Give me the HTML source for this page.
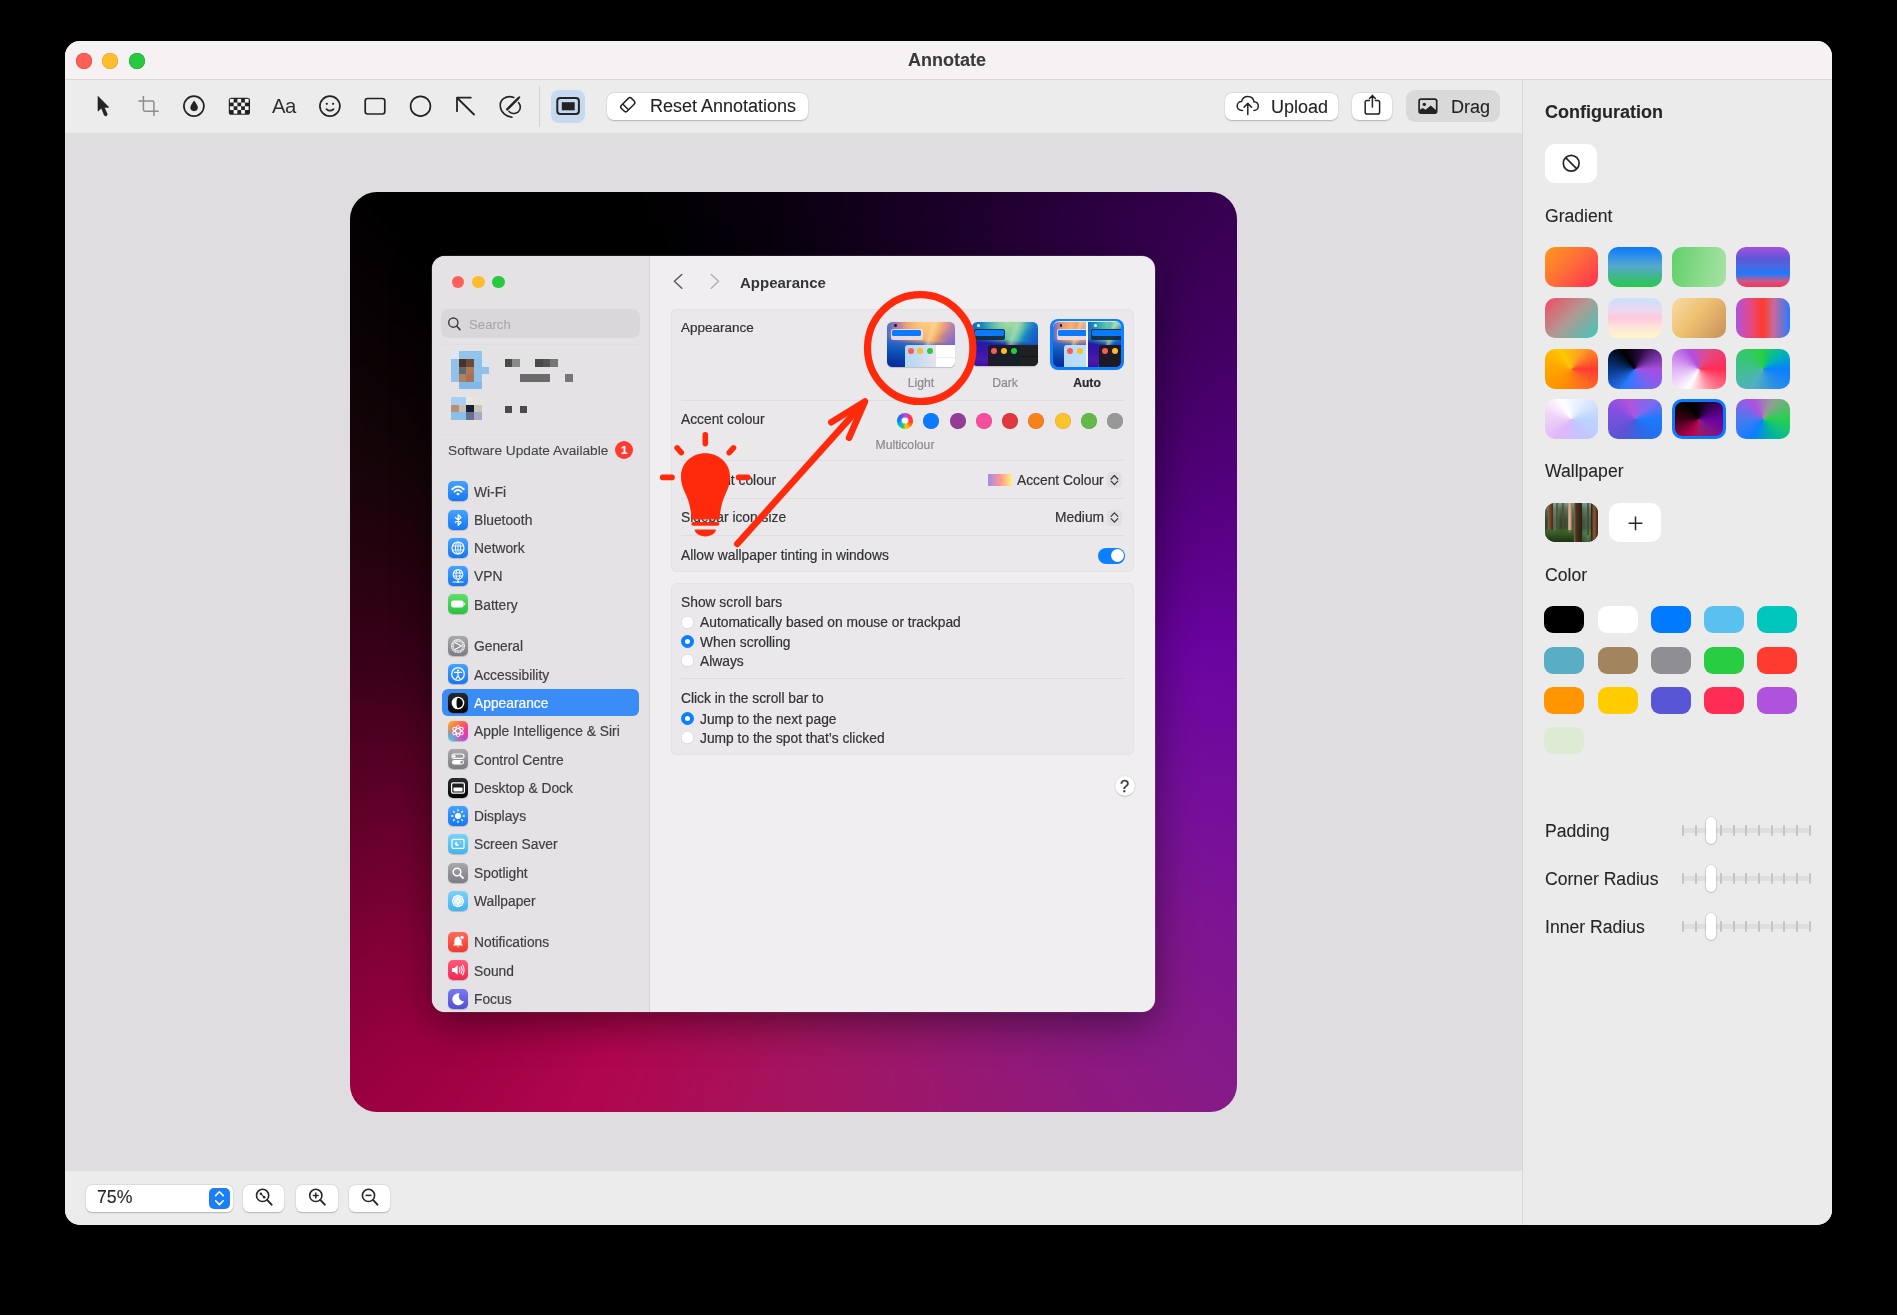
<!DOCTYPE html><html><head><meta charset="utf-8"><style>
html,body{margin:0;padding:0}
body{width:1897px;height:1315px;background:#000;position:relative;overflow:hidden;font-family:"Liberation Sans",sans-serif}
.a{position:absolute}
.t{position:absolute;white-space:nowrap;will-change:transform}
svg.a{overflow:visible}
</style></head><body>
<div class="a" style="left:65px;top:41px;width:1767px;height:1184px;border-radius:15px;overflow:hidden;background:#ebebeb">
<div class="a" style="left:-65px;top:-41px;width:1897px;height:1315px">
<div class="a" style="left:65.0px;top:41.0px;width:1767.0px;height:38.0px;background:#f6f2f4;border-radius:0px;"></div>
<div class="a" style="left:65.0px;top:79.0px;width:1767.0px;height:1.0px;background:#d9d7d9;border-radius:0px;"></div>
<div class="a" style="left:65.0px;top:80.0px;width:1457.0px;height:53.0px;background:#ececec;border-radius:0px;"></div>
<div class="a" style="left:65.0px;top:133.0px;width:1457.0px;height:1038.0px;background:#dfdde0;border-radius:0px;"></div>
<div class="a" style="left:65.0px;top:1171.0px;width:1457.0px;height:54.0px;background:#ececec;border-radius:0px;"></div>
<div class="a" style="left:1522.0px;top:80.0px;width:310.0px;height:1145.0px;background:#ebebeb;border-radius:0px;"></div>
<div class="a" style="left:1522.0px;top:80.0px;width:1.0px;height:1145.0px;background:#d6d6d6;border-radius:0px;"></div>
<div class="a" style="left:75.5px;top:53.0px;width:16.0px;height:16.0px;background:#ff5f57;border-radius:8px;box-shadow:inset 0 0 0 0.5px #e2463f"></div>
<div class="a" style="left:102.1px;top:53.0px;width:16.0px;height:16.0px;background:#febc2e;border-radius:8px;box-shadow:inset 0 0 0 0.5px #e1a325"></div>
<div class="a" style="left:128.7px;top:53.0px;width:16.0px;height:16.0px;background:#28c840;border-radius:8px;box-shadow:inset 0 0 0 0.5px #1aab29"></div>
<div class="t" style="left:908.0px;top:50.8px;font-size:18px;line-height:18px;color:#3a3a3a;font-weight:700;-webkit-text-stroke:0.1px #3a3a3a;">Annotate</div>
<svg class="a" style="left:0.0px;top:0.0px;" width="1897" height="140" viewBox="0 0 1897 140"><path d="M98 96.3 L98 111.2 L101.4 108.1 L104.2 114.9 Q105 116.4 106.5 115.7 Q107.7 115 107.1 113.8 L104.3 107.6 L108.8 107.3 Z" fill="#232323" stroke="#232323" stroke-width="0.6" stroke-linejoin="round"/></svg>
<svg class="a" style="left:0.0px;top:0.0px;" width="1897" height="140" viewBox="0 0 1897 140"><path d="M143.4 95.9 V109.6 Q143.4 111.3 145.1 111.3 H158.7 M138.3 101 H152.2 Q153.9 101 153.9 102.7 V116" fill="none" stroke="#8c8c8c" stroke-width="1.5"/></svg>
<svg class="a" style="left:0.0px;top:0.0px;" width="1897" height="140" viewBox="0 0 1897 140"><circle cx="193.9" cy="106.1" r="10.0" fill="none" stroke="#232323" stroke-width="1.7"/><path d="M194.1 100.6 C192.5 103 190.3 105.6 190.3 107.6 C190.3 109.8 192 111.2 194.1 111.2 C196.2 111.2 197.9 109.8 197.9 107.6 C197.9 105.6 195.7 103 194.1 100.6 Z" fill="#232323"/></svg>
<svg class="a" style="left:0.0px;top:0.0px;" width="1897" height="140" viewBox="0 0 1897 140"><rect x="228.8" y="97.7" width="21.2" height="17.1" rx="2.6" fill="#232323"/><rect x="229.90" y="98.90" width="3.75" height="3.7" fill="#f4f4f4"/><rect x="237.40" y="98.90" width="3.75" height="3.7" fill="#f4f4f4"/><rect x="244.90" y="98.90" width="3.75" height="3.7" fill="#f4f4f4"/><rect x="233.65" y="102.60" width="3.75" height="3.7" fill="#f4f4f4"/><rect x="241.15" y="102.60" width="3.75" height="3.7" fill="#f4f4f4"/><rect x="229.90" y="106.30" width="3.75" height="3.7" fill="#f4f4f4"/><rect x="237.40" y="106.30" width="3.75" height="3.7" fill="#f4f4f4"/><rect x="244.90" y="106.30" width="3.75" height="3.7" fill="#f4f4f4"/><rect x="233.65" y="110.00" width="3.75" height="3.7" fill="#f4f4f4"/><rect x="241.15" y="110.00" width="3.75" height="3.7" fill="#f4f4f4"/></svg>
<div class="t" style="left:272.3px;top:96.2px;font-size:20.3px;line-height:20.3px;color:#2e2e2e;font-weight:400;letter-spacing:-0.6px;-webkit-text-stroke:0px">Aa</div>
<svg class="a" style="left:0.0px;top:0.0px;" width="1897" height="140" viewBox="0 0 1897 140"><circle cx="329.9" cy="106.1" r="10.0" fill="none" stroke="#232323" stroke-width="1.7"/><circle cx="326.8" cy="103.8" r="1.1" fill="#232323"/><circle cx="333.1" cy="103.8" r="1.1" fill="#232323"/><path d="M326.4 109.1 Q330 112.3 333.6 109.1" fill="none" stroke="#232323" stroke-width="1.6" stroke-linecap="round"/></svg>
<svg class="a" style="left:0.0px;top:0.0px;" width="1897" height="140" viewBox="0 0 1897 140"><rect x="365.2" y="98.5" width="19.6" height="15.5" rx="2.4" fill="none" stroke="#232323" stroke-width="1.7"/></svg>
<svg class="a" style="left:0.0px;top:0.0px;" width="1897" height="140" viewBox="0 0 1897 140"><circle cx="420.5" cy="106.2" r="9.9" fill="none" stroke="#232323" stroke-width="1.7"/></svg>
<svg class="a" style="left:0.0px;top:0.0px;" width="1897" height="140" viewBox="0 0 1897 140"><path d="M470.8 97.7 H457 V111.2 M457.3 98 L474 114.5" fill="none" stroke="#232323" stroke-width="1.8" stroke-linecap="round" stroke-linejoin="round"/></svg>
<svg class="a" style="left:0.0px;top:0.0px;" width="1897" height="140" viewBox="0 0 1897 140"><path d="M513.8 97.5 C506 94.5 499.5 100 500.3 106.5 C501 112.5 506 116.8 512 117.3" fill="none" stroke="#232323" stroke-width="1.6" stroke-linecap="round"/><path d="M509 111.4 C511 113.8 515.5 114.2 518 112.2 C521 109.8 521 105.5 518.5 102.6" fill="none" stroke="#232323" stroke-width="1.6" stroke-linecap="round"/><path d="M507.2 109.4 L518.2 98.3" fill="none" stroke="#232323" stroke-width="2.4" stroke-linecap="round"/><circle cx="519.3" cy="97.3" r="1" fill="#232323"/></svg>
<div class="a" style="left:539.0px;top:85.5px;width:1.0px;height:41.2px;background:#d2d2d2;border-radius:0px;"></div>
<div class="a" style="left:551.1px;top:89.5px;width:34.3px;height:33.3px;background:#c6d9f1;border-radius:8px;"></div>
<svg class="a" style="left:0.0px;top:0.0px;" width="1897" height="140" viewBox="0 0 1897 140"><rect x="557.3" y="98" width="21.6" height="16.1" rx="3" fill="none" stroke="#232323" stroke-width="2"/><rect x="561.8" y="102.2" width="12.9" height="8.1" fill="#232323"/></svg>
<div class="a" style="left:607.0px;top:93.0px;width:201.0px;height:26.5px;background:#fff;border-radius:7px;box-shadow:0 0.5px 1.5px rgba(0,0,0,0.22),0 0 0 0.5px rgba(0,0,0,0.06)"></div>
<svg class="a" style="left:0.0px;top:0.0px;" width="1897" height="140" viewBox="0 0 1897 140"><g transform="rotate(-45 627.8 104.7)"><rect x="620.7" y="100.55" width="14.2" height="8.3" rx="2.3" fill="none" stroke="#232323" stroke-width="1.5"/><path d="M624.7 100.55 V108.85" stroke="#232323" stroke-width="1.5"/></g></svg>
<div class="t" style="left:649.5px;top:96.6px;font-size:18px;line-height:18px;color:#232323;font-weight:400;-webkit-text-stroke:0.1px #232323;">Reset Annotations</div>
<div class="a" style="left:1224.8px;top:93.0px;width:113.2px;height:27.0px;background:#fff;border-radius:7px;box-shadow:0 0.5px 1.5px rgba(0,0,0,0.22),0 0 0 0.5px rgba(0,0,0,0.06)"></div>
<svg class="a" style="left:0.0px;top:0.0px;" width="1897" height="140" viewBox="0 0 1897 140"><path d="M1242.5 110.5 C1238.5 110.5 1237.2 107.8 1237.2 106 C1237.2 103.4 1239.2 101.6 1241.6 101.6 C1242.2 98.5 1244.6 96.4 1247.8 96.4 C1251.2 96.4 1253.6 98.8 1254 101.8 C1256.5 101.9 1258.3 103.8 1258.3 106.2 C1258.3 108.6 1256.5 110.5 1254 110.5" fill="none" stroke="#232323" stroke-width="1.5" stroke-linecap="round"/><path d="M1247.8 114.6 V103.6 M1244 107.2 L1247.8 103.4 L1251.6 107.2" fill="none" stroke="#232323" stroke-width="1.5" stroke-linecap="round" stroke-linejoin="round"/></svg>
<div class="t" style="left:1270.5px;top:97.6px;font-size:18px;line-height:18px;color:#232323;font-weight:400;-webkit-text-stroke:0.1px #232323;">Upload</div>
<div class="a" style="left:1352.0px;top:93.0px;width:40.3px;height:27.0px;background:#fff;border-radius:7px;box-shadow:0 0.5px 1.5px rgba(0,0,0,0.22),0 0 0 0.5px rgba(0,0,0,0.06)"></div>
<svg class="a" style="left:0.0px;top:0.0px;" width="1897" height="140" viewBox="0 0 1897 140"><path d="M1369.4 100.4 H1367 Q1365.2 100.4 1365.2 102.2 V112.3 Q1365.2 114.1 1367 114.1 H1377.8 Q1379.6 114.1 1379.6 112.3 V102.2 Q1379.6 100.4 1377.8 100.4 H1375.4 M1372.4 107 V95.6 M1369.5 98.4 L1372.4 95.4 L1375.3 98.4" fill="none" stroke="#232323" stroke-width="1.5" stroke-linecap="round" stroke-linejoin="round"/></svg>
<div class="a" style="left:1406.0px;top:90.0px;width:94.3px;height:31.7px;background:#d9d9d9;border-radius:9px;"></div>
<svg class="a" style="left:0.0px;top:0.0px;" width="1897" height="140" viewBox="0 0 1897 140"><rect x="1419.1" y="99.2" width="17.6" height="13.9" rx="2" fill="none" stroke="#232323" stroke-width="1.7"/><path d="M1419.1 110.9 Q1421.2 107.7 1423 108.3 Q1424.4 108.8 1425.6 109.8 L1430.7 105.6 L1436.7 110.8 V113.1 H1419.1 Z" fill="#232323"/><circle cx="1424.3" cy="104.4" r="1.7" fill="#232323"/></svg>
<div class="t" style="left:1451.3px;top:97.6px;font-size:18px;line-height:18px;color:#232323;font-weight:400;-webkit-text-stroke:0.1px #232323;">Drag</div>
<div class="t" style="left:1544.6px;top:103.4px;font-size:18px;line-height:18px;color:#262626;font-weight:700;-webkit-text-stroke:0.1px #262626;">Configuration</div>
<div class="a" style="left:1544.8px;top:143.6px;width:52.5px;height:39.4px;background:#fff;border-radius:10px;"></div>
<svg class="a" style="left:0.0px;top:0.0px;" width="1897" height="200" viewBox="0 0 1897 200"><circle cx="1571.2" cy="163.2" r="7.9" fill="none" stroke="#262626" stroke-width="1.7"/><path d="M1565.6 157.6 L1576.8 168.8" stroke="#262626" stroke-width="1.7"/></svg>
<div class="t" style="left:1545.0px;top:207.5px;font-size:17.6px;line-height:17.6px;color:#262626;font-weight:400;-webkit-text-stroke:0.1px #262626;">Gradient</div>
<div class="a" style="left:1544.6px;top:247.0px;width:53.2px;height:40.2px;background:linear-gradient(135deg,#ff9a1a,#ff6a3a 50%,#ff2d55);border-radius:10px;"></div>
<div class="a" style="left:1608.4px;top:247.0px;width:53.2px;height:40.2px;background:linear-gradient(180deg,#0a7aff,#55a8cc 48%,#28c84a);border-radius:10px;"></div>
<div class="a" style="left:1672.4px;top:247.0px;width:53.2px;height:40.2px;background:linear-gradient(100deg,#60d068,#86da88 50%,#a8e2a6);border-radius:10px;"></div>
<div class="a" style="left:1736.4px;top:247.0px;width:53.2px;height:40.2px;background:linear-gradient(180deg,#a850e2 0%,#5a58d6 30%,#4a6ae4 50%,#1a7aff 66%,#c85a8a 85%,#ff3058 100%);border-radius:10px;"></div>
<div class="a" style="left:1544.6px;top:297.8px;width:53.2px;height:40.2px;background:linear-gradient(135deg,#f24a62,#b09a94 50%,#3ec8b8);border-radius:10px;"></div>
<div class="a" style="left:1608.4px;top:297.8px;width:53.2px;height:40.2px;background:linear-gradient(180deg,#cce0fc,#f0d6ec 35%,#ffc8dc 50%,#ffe2dc 70%,#fffac8);border-radius:10px;"></div>
<div class="a" style="left:1672.4px;top:297.8px;width:53.2px;height:40.2px;background:linear-gradient(130deg,#f7dba6,#efc070 45%,#c6905c);border-radius:10px;"></div>
<div class="a" style="left:1736.4px;top:297.8px;width:53.2px;height:40.2px;background:linear-gradient(90deg,#b052e0,#e8487a 30%,#ff3a2c 50%,#c86a9a 70%,#2a7aff);border-radius:10px;"></div>
<div class="a" style="left:1544.6px;top:348.5px;width:53.2px;height:40.2px;background:conic-gradient(from 90deg,#ff3b30,#ff6a24 45deg,#ff9000 120deg,#ffa800 190deg,#ffc800 240deg,#ffa020 300deg,#ff3b30 360deg);border-radius:10px;"></div>
<div class="a" style="left:1608.4px;top:348.5px;width:53.2px;height:40.2px;background:conic-gradient(from 90deg,#a64ee0,#7a62f2 50deg,#2a7aff 120deg,#0a3c90 175deg,#000 235deg,#2a0a40 290deg,#a64ee0 360deg);border-radius:10px;"></div>
<div class="a" style="left:1672.4px;top:348.5px;width:53.2px;height:40.2px;background:conic-gradient(from 90deg,#ff2d55,#ff8a9a 60deg,#ffffff 120deg,#e0b4f4 180deg,#b050e0 240deg,#e04a8a 300deg,#ff2d55 360deg);border-radius:10px;"></div>
<div class="a" style="left:1736.4px;top:348.5px;width:53.2px;height:40.2px;background:conic-gradient(from 90deg,#0a80ff,#2a8ee8 50deg,#50b0c0 120deg,#40c090 180deg,#28d040 265deg,#00b4b0 320deg,#0a80ff 360deg);border-radius:10px;"></div>
<div class="a" style="left:1544.6px;top:399.2px;width:53.2px;height:40.2px;background:conic-gradient(from 90deg,#bcd4ff,#c4c4ff 60deg,#e0b8f8 130deg,#f0d4f8 190deg,#ffffff 240deg,#e4eeff 300deg,#bcd4ff 360deg);border-radius:10px;"></div>
<div class="a" style="left:1608.4px;top:399.2px;width:53.2px;height:40.2px;background:conic-gradient(from 90deg,#1a7aff,#2a6ae8 60deg,#5a54d4 130deg,#8050e0 200deg,#b452de 250deg,#7a6af0 320deg,#1a7aff 360deg);border-radius:10px;"></div>
<div class="a" style="left:1672.4px;top:399.2px;width:53.2px;height:40.2px;background:#0a7aff;border-radius:10px;"></div>
<div class="a" style="left:1675.4px;top:402.2px;width:47.2px;height:34.2px;background:conic-gradient(from 90deg,#6a00a0,#801888 45deg,#a01860 90deg,#b4004c 120deg,#88003a 145deg,#3a0015 180deg,#150505 210deg,#000 235deg,#0a0010 270deg,#380050 315deg,#6a00a0 360deg);border-radius:7.5px;"></div>
<div class="a" style="left:1736.4px;top:399.2px;width:53.2px;height:40.2px;background:conic-gradient(from 90deg,#28d050,#00b4a0 60deg,#0a80ff 120deg,#4a7af0 180deg,#b050e0 240deg,#90a090 300deg,#28d050 360deg);border-radius:10px;"></div>
<div class="t" style="left:1545.0px;top:463.0px;font-size:17.6px;line-height:17.6px;color:#262626;font-weight:400;-webkit-text-stroke:0.1px #262626;">Wallpaper</div>
<div class="a" style="left:1544.8px;top:502.7px;width:53px;height:39.7px;border-radius:10px;overflow:hidden;background:#34442a"><div class="a" style="left:-2px;top:-2px;width:57px;height:43.7px;filter:blur(0.7px);background:linear-gradient(180deg,#8aa8b0 0%,#50684a 18%,#34442a 45%,#2e4424 62%,#3e6a2a 75%,#2a4a1e 90%,#1e3418 100%)"><div class="a" style="left:2px;top:2px;width:53px;height:39.7px"><div class="a" style="left:0;top:0;width:53px;height:39.7px;background:linear-gradient(90deg,rgba(0,0,0,0) 0%,rgba(160,190,200,0.35) 20%,rgba(0,0,0,0) 30%,rgba(150,180,190,0.25) 55%,rgba(0,0,0,0) 65%,rgba(160,190,200,0.3) 82%,rgba(0,0,0,0) 92%)"></div><div class="a" style="left:3.2px;top:0;width:4.6px;height:27px;background:linear-gradient(90deg,#8a6040,#6a3c1e 60%,#4a2a14)"></div><div class="a" style="left:11px;top:0;width:2.4px;height:30px;background:#4a5030;opacity:0.8"></div><div class="a" style="left:17px;top:0;width:2.4px;height:30px;background:#5a4a30;opacity:0.8"></div><div class="a" style="left:23px;top:0;width:4.4px;height:30px;background:linear-gradient(90deg,#b08a68,#e0c0a0 45%,#8a6040)"></div><div class="a" style="left:29.5px;top:0;width:8.2px;height:39.7px;background:linear-gradient(90deg,#9a6a48 0%,#4a3222 25%,#3a281a 60%,#2e2014 100%)"></div><div class="a" style="left:42px;top:0;width:2.4px;height:32px;background:#40482c;opacity:0.8"></div><div class="a" style="left:46.4px;top:0;width:6.8px;height:39.7px;background:linear-gradient(90deg,#2a1c10,#8a5a34 45%,#3a2414)"></div><div class="a" style="left:0;top:27px;width:29.5px;height:12.7px;background:linear-gradient(180deg,rgba(60,100,40,0.7),#2a4a1c 60%,#1c3214)"></div></div></div></div>
<div class="a" style="left:1608.7px;top:502.7px;width:52.7px;height:39.7px;background:#fff;border-radius:10px;"></div>
<svg class="a" style="left:0.0px;top:0.0px;" width="1897" height="560" viewBox="0 0 1897 560"><path d="M1635.5 516.4 V530.2 M1628.6 523.3 H1642.4" stroke="#262626" stroke-width="1.5"/></svg>
<div class="t" style="left:1545.0px;top:566.7px;font-size:17.6px;line-height:17.6px;color:#262626;font-weight:400;-webkit-text-stroke:0.1px #262626;">Color</div>
<div class="a" style="left:1544.3px;top:606.3px;width:40.2px;height:27.0px;background:#000000;border-radius:9px;"></div>
<div class="a" style="left:1597.6px;top:606.3px;width:40.2px;height:27.0px;background:#ffffff;border-radius:9px;"></div>
<div class="a" style="left:1650.8px;top:606.3px;width:40.2px;height:27.0px;background:#007aff;border-radius:9px;"></div>
<div class="a" style="left:1704.0px;top:606.3px;width:40.2px;height:27.0px;background:#5ac0f0;border-radius:9px;"></div>
<div class="a" style="left:1757.3px;top:606.3px;width:40.2px;height:27.0px;background:#00c7be;border-radius:9px;"></div>
<div class="a" style="left:1544.3px;top:646.5px;width:40.2px;height:27.0px;background:#59adc4;border-radius:9px;"></div>
<div class="a" style="left:1597.6px;top:646.5px;width:40.2px;height:27.0px;background:#a2845e;border-radius:9px;"></div>
<div class="a" style="left:1650.8px;top:646.5px;width:40.2px;height:27.0px;background:#8e8e93;border-radius:9px;"></div>
<div class="a" style="left:1704.0px;top:646.5px;width:40.2px;height:27.0px;background:#28cd41;border-radius:9px;"></div>
<div class="a" style="left:1757.3px;top:646.5px;width:40.2px;height:27.0px;background:#ff3b30;border-radius:9px;"></div>
<div class="a" style="left:1544.3px;top:686.5px;width:40.2px;height:27.0px;background:#ff9500;border-radius:9px;"></div>
<div class="a" style="left:1597.6px;top:686.5px;width:40.2px;height:27.0px;background:#ffcc00;border-radius:9px;"></div>
<div class="a" style="left:1650.8px;top:686.5px;width:40.2px;height:27.0px;background:#5856d6;border-radius:9px;"></div>
<div class="a" style="left:1704.0px;top:686.5px;width:40.2px;height:27.0px;background:#ff2d55;border-radius:9px;"></div>
<div class="a" style="left:1757.3px;top:686.5px;width:40.2px;height:27.0px;background:#af52de;border-radius:9px;"></div>
<div class="a" style="left:1544.3px;top:726.5px;width:40.2px;height:27.0px;background:#ddebd4;border-radius:9px;"></div>
<div class="t" style="left:1545.0px;top:822.7px;font-size:17.6px;line-height:17.6px;color:#262626;font-weight:400;-webkit-text-stroke:0.1px #262626;">Padding</div>
<div class="a" style="left:1683.0px;top:828.0px;width:126.6px;height:5.0px;background:#dedede;border-radius:2px;"></div>
<div class="a" style="left:1682.0px;top:825.3px;width:2.0px;height:10.4px;background:#c4c4c4;border-radius:1px;"></div>
<div class="a" style="left:1694.7px;top:825.3px;width:2.0px;height:10.4px;background:#c4c4c4;border-radius:1px;"></div>
<div class="a" style="left:1707.3px;top:825.3px;width:2.0px;height:10.4px;background:#c4c4c4;border-radius:1px;"></div>
<div class="a" style="left:1720.0px;top:825.3px;width:2.0px;height:10.4px;background:#c4c4c4;border-radius:1px;"></div>
<div class="a" style="left:1732.6px;top:825.3px;width:2.0px;height:10.4px;background:#c4c4c4;border-radius:1px;"></div>
<div class="a" style="left:1745.3px;top:825.3px;width:2.0px;height:10.4px;background:#c4c4c4;border-radius:1px;"></div>
<div class="a" style="left:1758.0px;top:825.3px;width:2.0px;height:10.4px;background:#c4c4c4;border-radius:1px;"></div>
<div class="a" style="left:1770.6px;top:825.3px;width:2.0px;height:10.4px;background:#c4c4c4;border-radius:1px;"></div>
<div class="a" style="left:1783.3px;top:825.3px;width:2.0px;height:10.4px;background:#c4c4c4;border-radius:1px;"></div>
<div class="a" style="left:1795.9px;top:825.3px;width:2.0px;height:10.4px;background:#c4c4c4;border-radius:1px;"></div>
<div class="a" style="left:1808.6px;top:825.3px;width:2.0px;height:10.4px;background:#c4c4c4;border-radius:1px;"></div>
<div class="a" style="left:1705.9px;top:817.2px;width:10.3px;height:26.6px;background:#fff;border-radius:5.2px;box-shadow:0 0.5px 2px rgba(0,0,0,0.25),0 0 0 0.5px rgba(0,0,0,0.08)"></div>
<div class="t" style="left:1545.0px;top:870.7px;font-size:17.6px;line-height:17.6px;color:#262626;font-weight:400;-webkit-text-stroke:0.1px #262626;">Corner Radius</div>
<div class="a" style="left:1683.0px;top:876.0px;width:126.6px;height:5.0px;background:#dedede;border-radius:2px;"></div>
<div class="a" style="left:1682.0px;top:873.3px;width:2.0px;height:10.4px;background:#c4c4c4;border-radius:1px;"></div>
<div class="a" style="left:1694.7px;top:873.3px;width:2.0px;height:10.4px;background:#c4c4c4;border-radius:1px;"></div>
<div class="a" style="left:1707.3px;top:873.3px;width:2.0px;height:10.4px;background:#c4c4c4;border-radius:1px;"></div>
<div class="a" style="left:1720.0px;top:873.3px;width:2.0px;height:10.4px;background:#c4c4c4;border-radius:1px;"></div>
<div class="a" style="left:1732.6px;top:873.3px;width:2.0px;height:10.4px;background:#c4c4c4;border-radius:1px;"></div>
<div class="a" style="left:1745.3px;top:873.3px;width:2.0px;height:10.4px;background:#c4c4c4;border-radius:1px;"></div>
<div class="a" style="left:1758.0px;top:873.3px;width:2.0px;height:10.4px;background:#c4c4c4;border-radius:1px;"></div>
<div class="a" style="left:1770.6px;top:873.3px;width:2.0px;height:10.4px;background:#c4c4c4;border-radius:1px;"></div>
<div class="a" style="left:1783.3px;top:873.3px;width:2.0px;height:10.4px;background:#c4c4c4;border-radius:1px;"></div>
<div class="a" style="left:1795.9px;top:873.3px;width:2.0px;height:10.4px;background:#c4c4c4;border-radius:1px;"></div>
<div class="a" style="left:1808.6px;top:873.3px;width:2.0px;height:10.4px;background:#c4c4c4;border-radius:1px;"></div>
<div class="a" style="left:1705.9px;top:865.2px;width:10.3px;height:26.6px;background:#fff;border-radius:5.2px;box-shadow:0 0.5px 2px rgba(0,0,0,0.25),0 0 0 0.5px rgba(0,0,0,0.08)"></div>
<div class="t" style="left:1545.0px;top:918.7px;font-size:17.6px;line-height:17.6px;color:#262626;font-weight:400;-webkit-text-stroke:0.1px #262626;">Inner Radius</div>
<div class="a" style="left:1683.0px;top:923.9px;width:126.6px;height:5.0px;background:#dedede;border-radius:2px;"></div>
<div class="a" style="left:1682.0px;top:921.2px;width:2.0px;height:10.4px;background:#c4c4c4;border-radius:1px;"></div>
<div class="a" style="left:1694.7px;top:921.2px;width:2.0px;height:10.4px;background:#c4c4c4;border-radius:1px;"></div>
<div class="a" style="left:1707.3px;top:921.2px;width:2.0px;height:10.4px;background:#c4c4c4;border-radius:1px;"></div>
<div class="a" style="left:1720.0px;top:921.2px;width:2.0px;height:10.4px;background:#c4c4c4;border-radius:1px;"></div>
<div class="a" style="left:1732.6px;top:921.2px;width:2.0px;height:10.4px;background:#c4c4c4;border-radius:1px;"></div>
<div class="a" style="left:1745.3px;top:921.2px;width:2.0px;height:10.4px;background:#c4c4c4;border-radius:1px;"></div>
<div class="a" style="left:1758.0px;top:921.2px;width:2.0px;height:10.4px;background:#c4c4c4;border-radius:1px;"></div>
<div class="a" style="left:1770.6px;top:921.2px;width:2.0px;height:10.4px;background:#c4c4c4;border-radius:1px;"></div>
<div class="a" style="left:1783.3px;top:921.2px;width:2.0px;height:10.4px;background:#c4c4c4;border-radius:1px;"></div>
<div class="a" style="left:1795.9px;top:921.2px;width:2.0px;height:10.4px;background:#c4c4c4;border-radius:1px;"></div>
<div class="a" style="left:1808.6px;top:921.2px;width:2.0px;height:10.4px;background:#c4c4c4;border-radius:1px;"></div>
<div class="a" style="left:1705.9px;top:913.1px;width:10.3px;height:26.6px;background:#fff;border-radius:5.2px;box-shadow:0 0.5px 2px rgba(0,0,0,0.25),0 0 0 0.5px rgba(0,0,0,0.08)"></div>
<div class="a" style="left:86.2px;top:1184.8px;width:146.5px;height:27.0px;background:#fff;border-radius:6px;box-shadow:0 0.5px 1.5px rgba(0,0,0,0.22),0 0 0 0.5px rgba(0,0,0,0.06)"></div>
<div class="t" style="left:96.5px;top:1189.0px;font-size:17.7px;line-height:17.7px;color:#262626;font-weight:400;-webkit-text-stroke:0.1px #262626;">75%</div>
<div class="a" style="left:209.0px;top:1187.7px;width:20.8px;height:21.0px;background:#1a7ef6;border-radius:5px;"></div>
<svg class="a" style="left:0.0px;top:0.0px;" width="1897" height="1315" viewBox="0 0 1897 1315"><path d="M215.6 1195.6 L219.4 1191.8 L223.2 1195.6 M215.6 1200.8 L219.4 1204.6 L223.2 1200.8" fill="none" stroke="#fff" stroke-width="1.6" stroke-linecap="round" stroke-linejoin="round"/></svg>
<div class="a" style="left:242.8px;top:1184.8px;width:41.5px;height:27.0px;background:#fff;border-radius:6px;box-shadow:0 0.5px 1.5px rgba(0,0,0,0.22),0 0 0 0.5px rgba(0,0,0,0.06)"></div>
<svg class="a" style="left:0.0px;top:0.0px;" width="1897" height="1315" viewBox="0 0 1897 1315"><circle cx="262.6" cy="1195.4" r="6.1" fill="none" stroke="#262626" stroke-width="1.6"/><path d="M267.1 1199.9 L271.6 1204.7" stroke="#262626" stroke-width="1.9" stroke-linecap="round"/><path d="M260.90000000000003 1193.8000000000002 L264.20000000000005 1197.2" stroke="#262626" stroke-width="1.1"/><circle cx="260.90000000000003" cy="1193.8000000000002" r="1.25" fill="#262626"/><circle cx="264.20000000000005" cy="1197.2" r="1.25" fill="#262626"/></svg>
<div class="a" style="left:296.0px;top:1184.8px;width:41.5px;height:27.0px;background:#fff;border-radius:6px;box-shadow:0 0.5px 1.5px rgba(0,0,0,0.22),0 0 0 0.5px rgba(0,0,0,0.06)"></div>
<svg class="a" style="left:0.0px;top:0.0px;" width="1897" height="1315" viewBox="0 0 1897 1315"><circle cx="315.8" cy="1195.4" r="6.1" fill="none" stroke="#262626" stroke-width="1.6"/><path d="M320.3 1199.9 L324.8 1204.7" stroke="#262626" stroke-width="1.9" stroke-linecap="round"/><path d="M312.8 1195.4 H318.8 M315.8 1192.4 V1198.4" stroke="#262626" stroke-width="1.5"/></svg>
<div class="a" style="left:348.7px;top:1184.8px;width:41.5px;height:27.0px;background:#fff;border-radius:6px;box-shadow:0 0.5px 1.5px rgba(0,0,0,0.22),0 0 0 0.5px rgba(0,0,0,0.06)"></div>
<svg class="a" style="left:0.0px;top:0.0px;" width="1897" height="1315" viewBox="0 0 1897 1315"><circle cx="368.5" cy="1195.4" r="6.1" fill="none" stroke="#262626" stroke-width="1.6"/><path d="M373.0 1199.9 L377.5 1204.7" stroke="#262626" stroke-width="1.9" stroke-linecap="round"/><path d="M365.5 1195.4 H371.5" stroke="#262626" stroke-width="1.5"/></svg>
<div class="a" style="left:350px;top:192px;width:887px;height:920px;border-radius:27px;overflow:hidden;background:conic-gradient(from 0deg at 50% 50%,#0a0010 0deg,#200030 25deg,#380052 45deg,#52007a 68deg,#6a04a0 90deg,#76109a 112deg,#861a88 136deg,#981870 160deg,#a5145e 180deg,#b0064e 205deg,#9a0040 224deg,#700030 242deg,#3a0018 268deg,#140408 295deg,#000 318deg,#000 340deg,#0a0010 360deg)">
<div class="a" style="left:-350px;top:-192px;width:1897px;height:1315px">
<div class="a" style="left:432px;top:256px;width:723px;height:755.5px;border-radius:13px;overflow:hidden;background:#f0eef1;box-shadow:0 12px 40px rgba(0,0,0,0.45),0 0 0 0.6px rgba(255,255,255,0.22)">
<div class="a" style="left:-432px;top:-256px;width:1897px;height:1315px">
<div class="a" style="left:432.0px;top:256.0px;width:217.5px;height:756.0px;background:#e4e2e5;border-radius:0px;"></div>
<div class="a" style="left:649.0px;top:256.0px;width:1.3px;height:756.0px;background:#d6d4d7;border-radius:0px;"></div>
<div class="a" style="left:451.8px;top:275.8px;width:12.4px;height:12.4px;background:#ff5f57;border-radius:6.2px;"></div>
<div class="a" style="left:472.2px;top:275.8px;width:12.4px;height:12.4px;background:#febc2e;border-radius:6.2px;"></div>
<div class="a" style="left:492.4px;top:275.8px;width:12.4px;height:12.4px;background:#28c840;border-radius:6.2px;"></div>
<div class="a" style="left:441.0px;top:309.3px;width:199.0px;height:28.4px;background:#d9d7da;border-radius:7.5px;"></div>
<svg class="a" style="left:0.0px;top:0.0px;" width="1897" height="400" viewBox="0 0 1897 400"><circle cx="453.3" cy="322.6" r="4.6" fill="none" stroke="#3e3e40" stroke-width="1.4"/><path d="M456.6 326 L460 329.6" stroke="#3e3e40" stroke-width="1.6" stroke-linecap="round"/></svg>
<div class="t" style="left:468.5px;top:318.0px;font-size:13.2px;line-height:13.2px;color:#a9a7aa;font-weight:400;-webkit-text-stroke:0.1px #a9a7aa;">Search</div>
<div class="a" style="left:441.0px;top:343.6px;width:199.0px;height:0.8px;background:#e0dee1;border-radius:0px;"></div>
<div class="a" style="left:451.3px;top:351.4px;width:7.9px;height:7.9px;background:#dde6f1;border-radius:0px;"></div>
<div class="a" style="left:458.9px;top:351.4px;width:7.9px;height:7.9px;background:#92c3ea;border-radius:0px;"></div>
<div class="a" style="left:466.4px;top:351.4px;width:7.9px;height:7.9px;background:#92c3ea;border-radius:0px;"></div>
<div class="a" style="left:474.0px;top:351.4px;width:7.9px;height:7.9px;background:#92c3ea;border-radius:0px;"></div>
<div class="a" style="left:451.3px;top:359.0px;width:7.9px;height:7.9px;background:#8fc1ea;border-radius:0px;"></div>
<div class="a" style="left:458.9px;top:359.0px;width:7.9px;height:7.9px;background:#4a3226;border-radius:0px;"></div>
<div class="a" style="left:466.4px;top:359.0px;width:7.9px;height:7.9px;background:#6a4a3a;border-radius:0px;"></div>
<div class="a" style="left:474.0px;top:359.0px;width:7.9px;height:7.9px;background:#8fc0e8;border-radius:0px;"></div>
<div class="a" style="left:481.5px;top:359.0px;width:7.9px;height:7.9px;background:#dfe5ef;border-radius:0px;"></div>
<div class="a" style="left:451.3px;top:366.5px;width:7.9px;height:7.9px;background:#8fc1ea;border-radius:0px;"></div>
<div class="a" style="left:458.9px;top:366.5px;width:7.9px;height:7.9px;background:#606870;border-radius:0px;"></div>
<div class="a" style="left:466.4px;top:366.5px;width:7.9px;height:7.9px;background:#b07850;border-radius:0px;"></div>
<div class="a" style="left:474.0px;top:366.5px;width:7.9px;height:7.9px;background:#8fc0e8;border-radius:0px;"></div>
<div class="a" style="left:481.5px;top:366.5px;width:7.9px;height:7.9px;background:#8fc0e8;border-radius:0px;"></div>
<div class="a" style="left:451.3px;top:374.1px;width:7.9px;height:7.9px;background:#8fc1ea;border-radius:0px;"></div>
<div class="a" style="left:458.9px;top:374.1px;width:7.9px;height:7.9px;background:#b08060;border-radius:0px;"></div>
<div class="a" style="left:466.4px;top:374.1px;width:7.9px;height:7.9px;background:#a87058;border-radius:0px;"></div>
<div class="a" style="left:474.0px;top:374.1px;width:7.9px;height:7.9px;background:#8fc0e8;border-radius:0px;"></div>
<div class="a" style="left:458.9px;top:381.6px;width:7.9px;height:7.9px;background:#80b8e8;border-radius:0px;"></div>
<div class="a" style="left:466.4px;top:381.6px;width:7.9px;height:7.9px;background:#80b8e8;border-radius:0px;"></div>
<div class="a" style="left:474.0px;top:381.6px;width:7.9px;height:7.9px;background:#80b8e8;border-radius:0px;"></div>
<div class="a" style="left:504.6px;top:359.2px;width:7.5px;height:7.4px;background:#4a4a4a;border-radius:0px;"></div>
<div class="a" style="left:512.1px;top:359.2px;width:7.5px;height:7.4px;background:#8a8a8a;border-radius:0px;"></div>
<div class="a" style="left:535.0px;top:359.2px;width:7.5px;height:7.4px;background:#4a4a4a;border-radius:0px;"></div>
<div class="a" style="left:542.5px;top:359.2px;width:7.8px;height:7.4px;background:#555;border-radius:0px;"></div>
<div class="a" style="left:550.2px;top:359.2px;width:7.5px;height:7.4px;background:#777;border-radius:0px;"></div>
<div class="a" style="left:519.8px;top:374.3px;width:30.1px;height:7.4px;background:#6a6a6a;border-radius:0px;"></div>
<div class="a" style="left:565.1px;top:374.3px;width:7.8px;height:7.4px;background:#777;border-radius:0px;"></div>
<div class="a" style="left:451.3px;top:397.0px;width:7.9px;height:7.9px;background:#a8cef0;border-radius:0px;"></div>
<div class="a" style="left:458.9px;top:397.0px;width:7.9px;height:7.9px;background:#a8cef0;border-radius:0px;"></div>
<div class="a" style="left:466.4px;top:397.0px;width:7.9px;height:7.9px;background:#e8e6e0;border-radius:0px;"></div>
<div class="a" style="left:474.0px;top:397.0px;width:7.9px;height:7.9px;background:#e8e4dc;border-radius:0px;"></div>
<div class="a" style="left:451.3px;top:404.6px;width:7.9px;height:7.9px;background:#b09078;border-radius:0px;"></div>
<div class="a" style="left:458.9px;top:404.6px;width:7.9px;height:7.9px;background:#c8c0b8;border-radius:0px;"></div>
<div class="a" style="left:466.4px;top:404.6px;width:7.9px;height:7.9px;background:#182038;border-radius:0px;"></div>
<div class="a" style="left:474.0px;top:404.6px;width:7.9px;height:7.9px;background:#c8c8b8;border-radius:0px;"></div>
<div class="a" style="left:451.3px;top:412.1px;width:7.9px;height:7.9px;background:#88c0e8;border-radius:0px;"></div>
<div class="a" style="left:458.9px;top:412.1px;width:7.9px;height:7.9px;background:#88c0e8;border-radius:0px;"></div>
<div class="a" style="left:466.4px;top:412.1px;width:7.9px;height:7.9px;background:#687090;border-radius:0px;"></div>
<div class="a" style="left:474.0px;top:412.1px;width:7.9px;height:7.9px;background:#a8a8c0;border-radius:0px;"></div>
<div class="a" style="left:504.6px;top:405.8px;width:7.5px;height:7.5px;background:#4a4a4a;border-radius:0px;"></div>
<div class="a" style="left:519.6px;top:405.8px;width:7.6px;height:7.5px;background:#4a4a4a;border-radius:0px;"></div>
<div class="a" style="left:441.0px;top:434.0px;width:199.0px;height:0.8px;background:#e0dee1;border-radius:0px;"></div>
<div class="t" style="left:448.3px;top:443.8px;font-size:13.7px;line-height:13.7px;color:#444345;font-weight:400;-webkit-text-stroke:0.1px #444345;">Software Update Available</div>
<div class="a" style="left:615.0px;top:440.6px;width:18.1px;height:18.1px;background:#ff3b30;border-radius:9.05px;"></div>
<div class="t" style="left:620.6px;top:445.1px;font-size:11.5px;line-height:11.5px;color:#fff;font-weight:700;-webkit-text-stroke:0.1px #fff;">1</div>
<div class="a" style="left:442.0px;top:688.6px;width:197.0px;height:27.9px;background:#3a8cf6;border-radius:6px;"></div>
<div class="a" style="left:448.2px;top:481.3px;width:20.0px;height:20.0px;background:linear-gradient(180deg,#45a2ff,#1677f2);border-radius:5px;box-shadow:0 0.5px 0.8px rgba(0,0,0,0.18)"></div><svg class="a" style="left:448.2px;top:481.3px" width="20" height="20" viewBox="0 0 20 20"><path d="M4.2 8.2 Q10 3 15.8 8.2" fill="none" stroke="#fff" stroke-width="1.9" stroke-linecap="round"/><path d="M6.6 10.6 Q10 7.6 13.4 10.6" fill="none" stroke="#fff" stroke-width="1.9" stroke-linecap="round"/><path d="M8.2 12.9 L10 11.6 L11.8 12.9 L10 14.6 Z" fill="#fff"/></svg>
<div class="t" style="left:473.5px;top:485.5px;font-size:13.8px;line-height:13.8px;color:#403f42;font-weight:400;-webkit-text-stroke:0.2px #403f42">Wi-Fi</div>
<div class="a" style="left:448.2px;top:509.5px;width:20.0px;height:20.0px;background:linear-gradient(180deg,#45a2ff,#1677f2);border-radius:5px;box-shadow:0 0.5px 0.8px rgba(0,0,0,0.18)"></div><svg class="a" style="left:448.2px;top:509.5px" width="20" height="20" viewBox="0 0 20 20"><path d="M7 7.3 L13 12.6 L10.2 15.2 V4.8 L13 7.4 L7 12.7" fill="none" stroke="#fff" stroke-width="1.3" stroke-linejoin="round"/></svg>
<div class="t" style="left:473.5px;top:513.7px;font-size:13.8px;line-height:13.8px;color:#403f42;font-weight:400;-webkit-text-stroke:0.2px #403f42">Bluetooth</div>
<div class="a" style="left:448.2px;top:537.9px;width:20.0px;height:20.0px;background:linear-gradient(180deg,#45a2ff,#1677f2);border-radius:5px;box-shadow:0 0.5px 0.8px rgba(0,0,0,0.18)"></div><svg class="a" style="left:448.2px;top:537.9px" width="20" height="20" viewBox="0 0 20 20"><circle cx="10" cy="10" r="6" fill="none" stroke="#fff" stroke-width="1.2"/><ellipse cx="10" cy="10" rx="2.6" ry="6" fill="none" stroke="#fff" stroke-width="1"/><path d="M4.4 8 H15.6 M4.4 12 H15.6 M10 4 V16" stroke="#fff" stroke-width="0.9"/></svg>
<div class="t" style="left:473.5px;top:542.1px;font-size:13.8px;line-height:13.8px;color:#403f42;font-weight:400;-webkit-text-stroke:0.2px #403f42">Network</div>
<div class="a" style="left:448.2px;top:566.1px;width:20.0px;height:20.0px;background:linear-gradient(180deg,#45a2ff,#1677f2);border-radius:5px;box-shadow:0 0.5px 0.8px rgba(0,0,0,0.18)"></div><svg class="a" style="left:448.2px;top:566.1px" width="20" height="20" viewBox="0 0 20 20"><circle cx="10" cy="8.4" r="4.8" fill="none" stroke="#fff" stroke-width="1.1"/><ellipse cx="10" cy="8.4" rx="2" ry="4.8" fill="none" stroke="#fff" stroke-width="0.9"/><path d="M5.5 7 H14.5 M5.5 10 H14.5 M10 13.2 V16 M4.5 16 H15.5" stroke="#fff" stroke-width="1"/><circle cx="10" cy="16" r="1" fill="#fff"/></svg>
<div class="t" style="left:473.5px;top:570.3px;font-size:13.8px;line-height:13.8px;color:#403f42;font-weight:400;-webkit-text-stroke:0.2px #403f42">VPN</div>
<div class="a" style="left:448.2px;top:594.3px;width:20.0px;height:20.0px;background:linear-gradient(180deg,#62de6c,#28c23e);border-radius:5px;box-shadow:0 0.5px 0.8px rgba(0,0,0,0.18)"></div><svg class="a" style="left:448.2px;top:594.3px" width="20" height="20" viewBox="0 0 20 20"><rect x="3.2" y="6.6" width="12.4" height="6.8" rx="2.2" fill="#fff"/><path d="M16.3 8.8 Q17.4 10 16.3 11.2" fill="#fff" stroke="#fff" stroke-width="0.8"/></svg>
<div class="t" style="left:473.5px;top:598.5px;font-size:13.8px;line-height:13.8px;color:#403f42;font-weight:400;-webkit-text-stroke:0.2px #403f42">Battery</div>
<div class="a" style="left:448.2px;top:636.0px;width:20.0px;height:20.0px;background:linear-gradient(180deg,#a8a8ad,#7c7c82);border-radius:5px;box-shadow:0 0.5px 0.8px rgba(0,0,0,0.18)"></div><svg class="a" style="left:448.2px;top:636.0px" width="20" height="20" viewBox="0 0 20 20"><circle cx="10" cy="10" r="6.3" fill="none" stroke="#fff" stroke-width="1.5" stroke-dasharray="1.1 0.55"/><circle cx="10" cy="10" r="4.9" fill="none" stroke="#fff" stroke-width="0.8"/><path d="M6.9 6.6 L13.6 10 L6.9 13.4" fill="none" stroke="#fff" stroke-width="1.1" stroke-linejoin="round"/></svg>
<div class="t" style="left:473.5px;top:640.2px;font-size:13.8px;line-height:13.8px;color:#403f42;font-weight:400;-webkit-text-stroke:0.2px #403f42">General</div>
<div class="a" style="left:448.2px;top:664.3px;width:20.0px;height:20.0px;background:linear-gradient(180deg,#45a2ff,#1677f2);border-radius:5px;box-shadow:0 0.5px 0.8px rgba(0,0,0,0.18)"></div><svg class="a" style="left:448.2px;top:664.3px" width="20" height="20" viewBox="0 0 20 20"><circle cx="10" cy="10" r="6.3" fill="none" stroke="#fff" stroke-width="1.3"/><circle cx="10" cy="6.6" r="1.1" fill="#fff"/><path d="M6.4 8.4 H13.6 M10 8.4 V11.6 M10 11.6 L8.2 14.6 M10 11.6 L11.8 14.6" stroke="#fff" stroke-width="1.2" stroke-linecap="round"/></svg>
<div class="t" style="left:473.5px;top:668.5px;font-size:13.8px;line-height:13.8px;color:#403f42;font-weight:400;-webkit-text-stroke:0.2px #403f42">Accessibility</div>
<div class="a" style="left:448.2px;top:692.5px;width:20.0px;height:20.0px;background:linear-gradient(180deg,#2a2a2c,#050505);border-radius:5px;box-shadow:0 0.5px 0.8px rgba(0,0,0,0.18)"></div><svg class="a" style="left:448.2px;top:692.5px" width="20" height="20" viewBox="0 0 20 20"><circle cx="10" cy="10" r="6.3" fill="#fff"/><path d="M10 5.1 A4.9 4.9 0 0 1 10 14.9 Z" fill="#0a0a0a"/><ellipse cx="10" cy="10" rx="1.5" ry="4.9" fill="#0a0a0a"/></svg>
<div class="t" style="left:473.5px;top:696.7px;font-size:13.8px;line-height:13.8px;color:#ffffff;font-weight:400;-webkit-text-stroke:0.2px #ffffff">Appearance</div>
<div class="a" style="left:448.2px;top:720.9px;width:20.0px;height:20.0px;background:radial-gradient(circle at 10% 95%,#3ec4ff 0%,rgba(62,196,255,0) 55%),linear-gradient(135deg,#ffb41e 0%,#ff5a5a 45%,#f03aa0 70%,#b050f0 100%);border-radius:5px;box-shadow:0 0.5px 0.8px rgba(0,0,0,0.18)"></div><svg class="a" style="left:448.2px;top:720.9px" width="20" height="20" viewBox="0 0 20 20"><g fill="none" stroke="#fff" stroke-width="1.0"><ellipse cx="10" cy="10" rx="2.3" ry="5.8"/><ellipse cx="10" cy="10" rx="2.3" ry="5.8" transform="rotate(60 10 10)"/><ellipse cx="10" cy="10" rx="2.3" ry="5.8" transform="rotate(120 10 10)"/></g></svg>
<div class="t" style="left:473.5px;top:725.1px;font-size:13.8px;line-height:13.8px;color:#403f42;font-weight:400;-webkit-text-stroke:0.2px #403f42">Apple Intelligence &amp; Siri</div>
<div class="a" style="left:448.2px;top:749.3px;width:20.0px;height:20.0px;background:linear-gradient(180deg,#a8a8ad,#7c7c82);border-radius:5px;box-shadow:0 0.5px 0.8px rgba(0,0,0,0.18)"></div><svg class="a" style="left:448.2px;top:749.3px" width="20" height="20" viewBox="0 0 20 20"><rect x="4" y="5" width="12" height="4.4" rx="2.2" fill="none" stroke="#fff" stroke-width="1.1"/><circle cx="6.3" cy="7.2" r="1.3" fill="#fff"/><rect x="4" y="11" width="12" height="4.4" rx="2.2" fill="#fff"/><circle cx="13.7" cy="13.2" r="1.3" fill="#8a8a90"/></svg>
<div class="t" style="left:473.5px;top:753.5px;font-size:13.8px;line-height:13.8px;color:#403f42;font-weight:400;-webkit-text-stroke:0.2px #403f42">Control Centre</div>
<div class="a" style="left:448.2px;top:777.6px;width:20.0px;height:20.0px;background:linear-gradient(180deg,#2a2a2c,#050505);border-radius:5px;box-shadow:0 0.5px 0.8px rgba(0,0,0,0.18)"></div><svg class="a" style="left:448.2px;top:777.6px" width="20" height="20" viewBox="0 0 20 20"><rect x="3.6" y="4.8" width="12.8" height="10.4" rx="1.6" fill="none" stroke="#fff" stroke-width="1.3"/><rect x="5.4" y="9.6" width="9.2" height="3.8" rx="0.6" fill="#fff"/></svg>
<div class="t" style="left:473.5px;top:781.8px;font-size:13.8px;line-height:13.8px;color:#403f42;font-weight:400;-webkit-text-stroke:0.2px #403f42">Desktop &amp; Dock</div>
<div class="a" style="left:448.2px;top:805.9px;width:20.0px;height:20.0px;background:linear-gradient(180deg,#45a2ff,#1677f2);border-radius:5px;box-shadow:0 0.5px 0.8px rgba(0,0,0,0.18)"></div><svg class="a" style="left:448.2px;top:805.9px" width="20" height="20" viewBox="0 0 20 20"><circle cx="10" cy="10" r="3" fill="#fff"/><g stroke="#fff" stroke-width="1.3" stroke-linecap="round"><path d="M10 3.6 V4.8 M10 15.2 V16.4 M3.6 10 H4.8 M15.2 10 H16.4 M5.5 5.5 L6.3 6.3 M13.7 13.7 L14.5 14.5 M5.5 14.5 L6.3 13.7 M13.7 6.3 L14.5 5.5"/></g></svg>
<div class="t" style="left:473.5px;top:810.1px;font-size:13.8px;line-height:13.8px;color:#403f42;font-weight:400;-webkit-text-stroke:0.2px #403f42">Displays</div>
<div class="a" style="left:448.2px;top:834.2px;width:20.0px;height:20.0px;background:linear-gradient(180deg,#7ad4fc,#40b4f0);border-radius:5px;box-shadow:0 0.5px 0.8px rgba(0,0,0,0.18)"></div><svg class="a" style="left:448.2px;top:834.2px" width="20" height="20" viewBox="0 0 20 20"><rect x="4" y="5.4" width="12" height="9" rx="1.2" fill="none" stroke="#fff" stroke-width="1.2"/><path d="M8.8 7.6 A2.2 2.2 0 1 0 11.2 10.6 A2.4 2.4 0 0 1 8.8 7.6Z" fill="#fff"/><circle cx="12.4" cy="8.2" r="0.5" fill="#fff"/></svg>
<div class="t" style="left:473.5px;top:838.4px;font-size:13.8px;line-height:13.8px;color:#403f42;font-weight:400;-webkit-text-stroke:0.2px #403f42">Screen Saver</div>
<div class="a" style="left:448.2px;top:862.5px;width:20.0px;height:20.0px;background:linear-gradient(180deg,#a8a8ad,#7c7c82);border-radius:5px;box-shadow:0 0.5px 0.8px rgba(0,0,0,0.18)"></div><svg class="a" style="left:448.2px;top:862.5px" width="20" height="20" viewBox="0 0 20 20"><circle cx="9" cy="9" r="3.8" fill="none" stroke="#fff" stroke-width="1.5"/><path d="M11.8 11.8 L15 15" stroke="#fff" stroke-width="1.8" stroke-linecap="round"/></svg>
<div class="t" style="left:473.5px;top:866.7px;font-size:13.8px;line-height:13.8px;color:#403f42;font-weight:400;-webkit-text-stroke:0.2px #403f42">Spotlight</div>
<div class="a" style="left:448.2px;top:890.8px;width:20.0px;height:20.0px;background:linear-gradient(180deg,#7ad4fc,#40b4f0);border-radius:5px;box-shadow:0 0.5px 0.8px rgba(0,0,0,0.18)"></div><svg class="a" style="left:448.2px;top:890.8px" width="20" height="20" viewBox="0 0 20 20"><g fill="none" stroke="#fff" stroke-width="1.1"><circle cx="10" cy="6.6" r="2.2"/><circle cx="10" cy="13.4" r="2.2"/><circle cx="6.6" cy="10" r="2.2"/><circle cx="13.4" cy="10" r="2.2"/><circle cx="7.6" cy="7.6" r="2.2"/><circle cx="12.4" cy="12.4" r="2.2"/><circle cx="7.6" cy="12.4" r="2.2"/><circle cx="12.4" cy="7.6" r="2.2"/></g></svg>
<div class="t" style="left:473.5px;top:895.0px;font-size:13.8px;line-height:13.8px;color:#403f42;font-weight:400;-webkit-text-stroke:0.2px #403f42">Wallpaper</div>
<div class="a" style="left:448.2px;top:932.0px;width:20.0px;height:20.0px;background:linear-gradient(180deg,#ff6a5a,#f03a2e);border-radius:5px;box-shadow:0 0.5px 0.8px rgba(0,0,0,0.18)"></div><svg class="a" style="left:448.2px;top:932.0px" width="20" height="20" viewBox="0 0 20 20"><path d="M10 4.6 C7.4 4.6 6.4 6.8 6.4 9 V11.8 L5 13.6 H15 L13.6 11.8 V9 C13.6 6.8 12.6 4.6 10 4.6 Z" fill="#fff"/><path d="M8.6 14.6 Q10 16.2 11.4 14.6" fill="#fff"/><circle cx="14" cy="5.4" r="2.2" fill="#fff" stroke="#f44" stroke-width="0.8"/></svg>
<div class="t" style="left:473.5px;top:936.2px;font-size:13.8px;line-height:13.8px;color:#403f42;font-weight:400;-webkit-text-stroke:0.2px #403f42">Notifications</div>
<div class="a" style="left:448.2px;top:960.3px;width:20.0px;height:20.0px;background:linear-gradient(180deg,#ff5a7a,#f02a50);border-radius:5px;box-shadow:0 0.5px 0.8px rgba(0,0,0,0.18)"></div><svg class="a" style="left:448.2px;top:960.3px" width="20" height="20" viewBox="0 0 20 20"><path d="M4 8 H6.4 L9.6 5.2 V14.8 L6.4 12 H4 Z" fill="#fff"/><path d="M11.4 7.8 Q12.6 10 11.4 12.2 M13 6.4 Q15.2 10 13 13.6 M14.6 5 Q17.6 10 14.6 15" fill="none" stroke="#fff" stroke-width="1.1" stroke-linecap="round"/></svg>
<div class="t" style="left:473.5px;top:964.5px;font-size:13.8px;line-height:13.8px;color:#403f42;font-weight:400;-webkit-text-stroke:0.2px #403f42">Sound</div>
<div class="a" style="left:448.2px;top:988.6px;width:20.0px;height:20.0px;background:linear-gradient(180deg,#7a78f0,#5250d4);border-radius:5px;box-shadow:0 0.5px 0.8px rgba(0,0,0,0.18)"></div><svg class="a" style="left:448.2px;top:988.6px" width="20" height="20" viewBox="0 0 20 20"><path d="M11.6 4.4 A6 6 0 1 0 16 12.2 A5 5 0 0 1 11.6 4.4 Z" fill="#fff"/></svg>
<div class="t" style="left:473.5px;top:992.8px;font-size:13.8px;line-height:13.8px;color:#403f42;font-weight:400;-webkit-text-stroke:0.2px #403f42">Focus</div>
<svg class="a" style="left:0.0px;top:0.0px;" width="1897" height="300" viewBox="0 0 1897 300"><path d="M681.8 274.5 L674.4 281.3 L681.8 288.2" fill="none" stroke="#5a595c" stroke-width="1.5" stroke-linecap="round" stroke-linejoin="round"/><path d="M711.2 274.5 L718.6 281.3 L711.2 288.2" fill="none" stroke="#b0afb2" stroke-width="1.5" stroke-linecap="round" stroke-linejoin="round"/></svg>
<div class="t" style="left:739.8px;top:275.0px;font-size:15px;line-height:15px;color:#363538;font-weight:700;-webkit-text-stroke:0px">Appearance</div>
<div class="a" style="left:670.8px;top:308.9px;width:463.7px;height:263.5px;background:#eae8eb;border-radius:6px;box-shadow:inset 0 0 0 0.8px #e1dfe2"></div>
<div class="t" style="left:681.0px;top:321.3px;font-size:13.5px;line-height:13.5px;color:#333235;font-weight:400;-webkit-text-stroke:0.2px #333235;">Appearance</div>
<div class="a" style="left:887.2px;top:321.8px;width:67.7px;height:44.9px;border-radius:5.5px;overflow:hidden;background:radial-gradient(ellipse 32% 45% at 100% 55%,rgba(110,100,210,0.95),rgba(140,110,200,0) 100%),linear-gradient(108deg,rgba(255,255,255,0) 52%,rgba(255,225,160,0.55) 58%,rgba(255,225,160,0.1) 66%,rgba(255,255,255,0) 70%),radial-gradient(ellipse 38% 40% at 58% 0%,rgba(255,208,130,1),rgba(255,200,120,0) 100%),linear-gradient(186deg,rgba(30,90,200,0) 40%,rgba(40,100,200,0.9) 50%,#0a58b8 66%,#0a3aa6 84%,#082a98 100%),linear-gradient(90deg,#4a70c8 0%,#a078b4 12%,#e89a74 30%,#f4b274 55%,#ee9a62 75%,#b07cb8 100%);box-shadow:0 0.5px 1px rgba(0,0,0,0.18)"><div class="a" style="left:6.7px;top:2.1px;width:2.8px;height:2.8px;border-radius:1.4px;background:#1a1a1a"></div><div class="a" style="left:3.8px;top:7px;width:31.7px;height:11.6px;border-radius:2.6px;background:rgba(236,222,226,0.92)"></div><div class="a" style="left:4.8px;top:8.2px;width:29.1px;height:5.6px;border-radius:1.6px;background:#0a7aff"></div><div class="a" style="left:17.6px;top:23.4px;width:50.1px;height:21.5px;border-radius:3px 0 0 0;background:linear-gradient(90deg,#b4d6f2 0%,#c0dcf4 25%,#e6e0f0 55%,#fde6dc 100%)"></div><div class="a" style="left:49.3px;top:23.4px;width:18.4px;height:21.5px;background:#fff"></div><div class="a" style="left:49.3px;top:35px;width:18.4px;height:0.6px;background:#eeeeee"></div><div class="a" style="left:20.40px;top:26.50px;width:6.0px;height:6.0px;border-radius:3.0px;background:#fc5a52"></div><div class="a" style="left:30.30px;top:26.50px;width:6.0px;height:6.0px;border-radius:3.0px;background:#fdbb2a"></div><div class="a" style="left:40.30px;top:26.50px;width:6.0px;height:6.0px;border-radius:3.0px;background:#2ac840"></div></div>
<div class="a" style="left:971.8px;top:321.8px;width:66.1px;height:44.3px;border-radius:5.5px;overflow:hidden;background:radial-gradient(ellipse 30% 50% at 100% 50%,rgba(20,80,200,0.95),rgba(20,100,200,0) 100%),linear-gradient(108deg,rgba(255,255,255,0) 50%,rgba(190,230,170,0.6) 57%,rgba(190,230,170,0.15) 66%,rgba(255,255,255,0) 70%),radial-gradient(ellipse 40% 45% at 55% 0%,rgba(165,222,160,1),rgba(120,200,170,0) 100%),linear-gradient(186deg,rgba(40,20,160,0) 40%,rgba(40,20,160,0.95) 52%,#3a16a8 70%,#4a1ab0 85%,#3a1098 100%),linear-gradient(90deg,#1a68c0 0%,#1a90c0 20%,#3ab4b4 40%,#60c0a8 55%,#1898c0 80%,#1a70c8 100%);box-shadow:0 0.5px 1px rgba(0,0,0,0.18)"><div class="a" style="left:5px;top:2.1px;width:3px;height:3px;border-radius:1.5px;background:#f4f8ff"></div><div class="a" style="left:1.8px;top:6.8px;width:31.7px;height:11.2px;border-radius:2.6px;background:rgba(20,40,60,0.92)"></div><div class="a" style="left:2.8px;top:8.2px;width:29.6px;height:5.6px;border-radius:1.6px;background:#0a7aff"></div><div class="a" style="left:16.2px;top:23.4px;width:50px;height:21px;border-radius:3px 0 0 0;background:linear-gradient(90deg,#1e1a2a,#142028 60%,#1a2226)"></div><div class="a" style="left:48.3px;top:23.4px;width:18px;height:21px;background:#1e2222"></div><div class="a" style="left:48.3px;top:34.6px;width:18px;height:0.7px;background:#121414"></div><div class="a" style="left:19.20px;top:26.50px;width:6.0px;height:6.0px;border-radius:3.0px;background:#fc5a52"></div><div class="a" style="left:29.10px;top:26.50px;width:6.0px;height:6.0px;border-radius:3.0px;background:#fdbb2a"></div><div class="a" style="left:39.10px;top:26.50px;width:6.0px;height:6.0px;border-radius:3.0px;background:#2ac840"></div></div>
<div class="a" style="left:1050.1px;top:318.6px;width:73.9px;height:51.3px;background:#0a7fff;border-radius:8px;"></div>
<div class="a" style="left:1052.6px;top:321.1px;width:68.9px;height:46.3px;background:#dfe8f4;border-radius:6px;"></div>
<div class="a" style="left:1053.1px;top:322px;width:67.9px;height:44.7px;border-radius:5.5px;overflow:hidden;background:#f4f4f6"><div class="a" style="left:0;top:0;width:33.2px;height:44.7px;overflow:hidden;background:radial-gradient(ellipse 32% 45% at 140% 55%,rgba(110,100,210,0.95),rgba(140,110,200,0) 100%),linear-gradient(108deg,rgba(255,255,255,0) 52%,rgba(255,225,160,0.55) 58%,rgba(255,225,160,0.1) 66%,rgba(255,255,255,0) 70%),radial-gradient(ellipse 38% 40% at 110% 0%,rgba(255,208,130,1),rgba(255,200,120,0) 100%),linear-gradient(186deg,rgba(30,90,200,0) 40%,rgba(40,100,200,0.9) 50%,#0a58b8 66%,#0a3aa6 84%,#082a98 100%),linear-gradient(90deg,#4a70c8 0%,#a078b4 12%,#e89a74 30%,#f4b274 55%,#ee9a62 75%,#b07cb8 100%)"><div class="a" style="left:6.6px;top:2.1px;width:2.8px;height:2.8px;border-radius:1.4px;background:#1a1a1a"></div><div class="a" style="left:3.6px;top:6.8px;width:34px;height:11.7px;border-radius:2.6px;background:rgba(236,222,226,0.92)"></div><div class="a" style="left:4.9px;top:8.3px;width:33px;height:5.3px;border-radius:1.6px;background:#0a7aff"></div><div class="a" style="left:11.1px;top:23.4px;width:30px;height:21.3px;border-radius:3px 0 0 0;background:linear-gradient(90deg,#b8daf6,#c0e0f8)"></div><div class="a" style="left:14.20px;top:26.30px;width:6.0px;height:6.0px;border-radius:3.0px;background:#fc5a52"></div><div class="a" style="left:24.30px;top:26.30px;width:6.0px;height:6.0px;border-radius:3.0px;background:#fdbb2a"></div></div><div class="a" style="left:34.9px;top:0;width:33px;height:44.7px;overflow:hidden;background:radial-gradient(ellipse 30% 50% at 100% 50%,rgba(20,80,200,0.95),rgba(20,100,200,0) 100%),linear-gradient(108deg,rgba(255,255,255,0) 50%,rgba(190,230,170,0.6) 57%,rgba(190,230,170,0.15) 66%,rgba(255,255,255,0) 70%),radial-gradient(ellipse 40% 45% at 90% 0%,rgba(165,222,160,1),rgba(120,200,170,0) 100%),linear-gradient(186deg,rgba(40,20,160,0) 40%,rgba(40,20,160,0.95) 52%,#3a16a8 70%,#4a1ab0 85%,#3a1098 100%),linear-gradient(90deg,#1a68c0 0%,#1a90c0 20%,#3ab4b4 40%,#60c0a8 55%,#1898c0 80%,#1a70c8 100%)"><div class="a" style="left:6.5px;top:2.1px;width:3px;height:3px;border-radius:1.5px;background:#f4f8ff"></div><div class="a" style="left:3.1px;top:6.8px;width:34px;height:11.7px;border-radius:2.6px;background:rgba(20,40,60,0.92)"></div><div class="a" style="left:4.1px;top:8.3px;width:34px;height:5.3px;border-radius:1.6px;background:#0a7aff"></div><div class="a" style="left:11px;top:23.4px;width:30px;height:21.3px;border-radius:3px 0 0 0;background:#1c1a26"></div><div class="a" style="left:14.00px;top:26.30px;width:6.0px;height:6.0px;border-radius:3.0px;background:#fc5a52"></div><div class="a" style="left:23.80px;top:26.30px;width:6.0px;height:6.0px;border-radius:3.0px;background:#fdbb2a"></div></div></div>
<div class="t" style="left:921.2px;top:377.1px;font-size:12.2px;line-height:12.2px;color:#8b8a8d;font-weight:400;-webkit-text-stroke:0.2px #8b8a8d;transform:translateX(-50%)">Light</div>
<div class="t" style="left:1004.8px;top:377.1px;font-size:12.2px;line-height:12.2px;color:#8b8a8d;font-weight:400;-webkit-text-stroke:0.2px #8b8a8d;transform:translateX(-50%)">Dark</div>
<div class="t" style="left:1087.2px;top:377.1px;font-size:12.2px;line-height:12.2px;color:#2a2a2c;font-weight:700;-webkit-text-stroke:0.2px #2a2a2c;transform:translateX(-50%)">Auto</div>
<div class="a" style="left:681.0px;top:399.9px;width:443.4px;height:1.0px;background:#dfdde0;border-radius:0px;"></div>
<div class="t" style="left:681.0px;top:412.7px;font-size:13.8px;line-height:13.8px;color:#333235;font-weight:400;-webkit-text-stroke:0.2px #333235;">Accent colour</div>
<div class="a" style="left:896.9px;top:412.5px;width:16.0px;height:16.0px;background:conic-gradient(from 200deg,#34c759,#00c7be 30deg,#007aff 80deg,#5856d6 120deg,#af52de 160deg,#ff2d55 220deg,#ff3b30 260deg,#ff9500 300deg,#ffcc00 330deg,#34c759 360deg);border-radius:8px;"></div>
<div class="a" style="left:902.0px;top:417.6px;width:5.8px;height:5.8px;background:#fff;border-radius:2.9px;box-shadow:0 0 1.2px 0.6px rgba(255,255,255,0.8)"></div>
<div class="a" style="left:923.2px;top:412.5px;width:16.0px;height:16.0px;background:#0a7aff;border-radius:8px;box-shadow:inset 0 0 0 0.5px rgba(0,0,0,0.12)"></div>
<div class="a" style="left:949.5px;top:412.5px;width:16.0px;height:16.0px;background:#953d96;border-radius:8px;box-shadow:inset 0 0 0 0.5px rgba(0,0,0,0.12)"></div>
<div class="a" style="left:975.7px;top:412.5px;width:16.0px;height:16.0px;background:#f74f9e;border-radius:8px;box-shadow:inset 0 0 0 0.5px rgba(0,0,0,0.12)"></div>
<div class="a" style="left:1002.0px;top:412.5px;width:16.0px;height:16.0px;background:#e0383e;border-radius:8px;box-shadow:inset 0 0 0 0.5px rgba(0,0,0,0.12)"></div>
<div class="a" style="left:1028.3px;top:412.5px;width:16.0px;height:16.0px;background:#f7821b;border-radius:8px;box-shadow:inset 0 0 0 0.5px rgba(0,0,0,0.12)"></div>
<div class="a" style="left:1054.6px;top:412.5px;width:16.0px;height:16.0px;background:#fcc42a;border-radius:8px;box-shadow:inset 0 0 0 0.5px rgba(0,0,0,0.12)"></div>
<div class="a" style="left:1080.9px;top:412.5px;width:16.0px;height:16.0px;background:#62ba46;border-radius:8px;box-shadow:inset 0 0 0 0.5px rgba(0,0,0,0.12)"></div>
<div class="a" style="left:1107.1px;top:412.5px;width:16.0px;height:16.0px;background:#989898;border-radius:8px;box-shadow:inset 0 0 0 0.5px rgba(0,0,0,0.12)"></div>
<div class="t" style="left:904.9px;top:438.8px;font-size:12.2px;line-height:12.2px;color:#8b8a8d;font-weight:400;-webkit-text-stroke:0.2px #8b8a8d;transform:translateX(-50%)">Multicolour</div>
<div class="a" style="left:681.0px;top:459.8px;width:443.4px;height:1.0px;background:#dfdde0;border-radius:0px;"></div>
<div class="t" style="left:681.0px;top:473.8px;font-size:13.8px;line-height:13.8px;color:#333235;font-weight:400;-webkit-text-stroke:0.2px #333235;">Highlight colour</div>
<div class="a" style="left:988.0px;top:474.2px;width:24.3px;height:12.2px;background:linear-gradient(90deg,#9890e6,#ff9494 50%,#fff27e);border-radius:0px;"></div>
<div class="t" style="left:1017.0px;top:473.8px;font-size:13.8px;line-height:13.8px;color:#333235;font-weight:400;-webkit-text-stroke:0.2px #333235;">Accent Colour</div>
<div class="a" style="left:1106.6px;top:472.2px;width:15.6px;height:15.7px;background:#e1dfe2;border-radius:4px;"></div><svg class="a" style="left:0.0px;top:0.0px;" width="1897" height="1315" viewBox="0 0 1897 1315"><path d="M1111.1 478.94999999999993 L1114.4 475.44999999999993 L1117.8 478.94999999999993 M1111.1 481.15 L1114.4 484.65 L1117.8 481.15" fill="none" stroke="#3a3a3c" stroke-width="1.3" stroke-linecap="round" stroke-linejoin="round"/></svg>
<div class="a" style="left:681.0px;top:497.6px;width:443.4px;height:1.0px;background:#dfdde0;border-radius:0px;"></div>
<div class="t" style="left:681.0px;top:511.1px;font-size:13.8px;line-height:13.8px;color:#333235;font-weight:400;-webkit-text-stroke:0.2px #333235;">Sidebar icon size</div>
<div class="t" style="left:1054.6px;top:511.1px;font-size:13.8px;line-height:13.8px;color:#333235;font-weight:400;-webkit-text-stroke:0.2px #333235;">Medium</div>
<div class="a" style="left:1106.6px;top:509.5px;width:15.6px;height:16.0px;background:#e1dfe2;border-radius:4px;"></div><svg class="a" style="left:0.0px;top:0.0px;" width="1897" height="1315" viewBox="0 0 1897 1315"><path d="M1111.1 516.4 L1114.4 512.9 L1117.8 516.4 M1111.1 518.6 L1114.4 522.1 L1117.8 518.6" fill="none" stroke="#3a3a3c" stroke-width="1.3" stroke-linecap="round" stroke-linejoin="round"/></svg>
<div class="a" style="left:681.0px;top:535.2px;width:443.4px;height:1.0px;background:#dfdde0;border-radius:0px;"></div>
<div class="t" style="left:681.0px;top:548.5px;font-size:13.8px;line-height:13.8px;color:#333235;font-weight:400;-webkit-text-stroke:0.2px #333235;">Allow wallpaper tinting in windows</div>
<div class="a" style="left:1098.0px;top:547.5px;width:26.6px;height:16.0px;background:#0a80ff;border-radius:8px;"></div>
<div class="a" style="left:1110.6px;top:548.8px;width:13.2px;height:13.2px;background:#fff;border-radius:6.6px;box-shadow:0 0.5px 1px rgba(0,0,0,0.2)"></div>
<div class="a" style="left:670.8px;top:583.3px;width:463.7px;height:171.4px;background:#eae8eb;border-radius:6px;box-shadow:inset 0 0 0 0.8px #e1dfe2"></div>
<div class="t" style="left:681.0px;top:596.1px;font-size:13.8px;line-height:13.8px;color:#333235;font-weight:400;-webkit-text-stroke:0.2px #333235;">Show scroll bars</div>
<div class="a" style="left:681.0px;top:615.5px;width:13.4px;height:13.4px;background:#fff;border-radius:6.7px;box-shadow:inset 0 0 0 0.6px #d0ced1,0 0.5px 0.6px rgba(0,0,0,0.08)"></div>
<div class="t" style="left:700.2px;top:616.2px;font-size:13.8px;line-height:13.8px;color:#333235;font-weight:400;-webkit-text-stroke:0.2px #333235;">Automatically based on mouse or trackpad</div>
<div class="a" style="left:681.0px;top:634.8px;width:13.4px;height:13.4px;background:#0a7fff;border-radius:6.7px;"></div><div class="a" style="left:685.1px;top:638.9px;width:5.2px;height:5.2px;background:#fff;border-radius:2.6px;"></div>
<div class="t" style="left:700.2px;top:635.5px;font-size:13.8px;line-height:13.8px;color:#333235;font-weight:400;-webkit-text-stroke:0.2px #333235;">When scrolling</div>
<div class="a" style="left:681.0px;top:654.1px;width:13.4px;height:13.4px;background:#fff;border-radius:6.7px;box-shadow:inset 0 0 0 0.6px #d0ced1,0 0.5px 0.6px rgba(0,0,0,0.08)"></div>
<div class="t" style="left:700.2px;top:654.8px;font-size:13.8px;line-height:13.8px;color:#333235;font-weight:400;-webkit-text-stroke:0.2px #333235;">Always</div>
<div class="a" style="left:681.0px;top:678.4px;width:443.4px;height:1.0px;background:#dfdde0;border-radius:0px;"></div>
<div class="t" style="left:681.0px;top:692.3px;font-size:13.8px;line-height:13.8px;color:#333235;font-weight:400;-webkit-text-stroke:0.2px #333235;">Click in the scroll bar to</div>
<div class="a" style="left:681.0px;top:711.8px;width:13.4px;height:13.4px;background:#0a7fff;border-radius:6.7px;"></div><div class="a" style="left:685.1px;top:715.9px;width:5.2px;height:5.2px;background:#fff;border-radius:2.6px;"></div>
<div class="t" style="left:700.2px;top:712.5px;font-size:13.8px;line-height:13.8px;color:#333235;font-weight:400;-webkit-text-stroke:0.2px #333235;">Jump to the next page</div>
<div class="a" style="left:681.0px;top:731.1px;width:13.4px;height:13.4px;background:#fff;border-radius:6.7px;box-shadow:inset 0 0 0 0.6px #d0ced1,0 0.5px 0.6px rgba(0,0,0,0.08)"></div>
<div class="t" style="left:700.2px;top:731.8px;font-size:13.8px;line-height:13.8px;color:#333235;font-weight:400;-webkit-text-stroke:0.2px #333235;">Jump to the spot that’s clicked</div>
<div class="a" style="left:1114.5px;top:775.8px;width:20.5px;height:20.5px;background:#fff;border-radius:10.25px;box-shadow:0 0.5px 1.2px rgba(0,0,0,0.25),0 0 0 0.5px rgba(0,0,0,0.06)"></div>
<div class="t" style="left:1119.9px;top:778.0px;font-size:16.5px;line-height:16.5px;color:#3a3a3a;font-weight:400;-webkit-text-stroke:0.35px #3a3a3a">?</div>
</div></div>
<svg class="a" style="left:0.0px;top:0.0px;" width="1897" height="1315" viewBox="0 0 1897 1315"><ellipse cx="920.2" cy="348.1" rx="52.7" ry="53.4" fill="none" stroke="#ff2a0c" stroke-width="7.2"/><path d="M737.3 543.9 L862.5 404.2" fill="none" stroke="#ff2a0c" stroke-width="6.6" stroke-linecap="round"/><path d="M831.3 422.3 L865 401.5 L849.1 437.8" fill="none" stroke="#ff2a0c" stroke-width="6.6" stroke-linecap="round" stroke-linejoin="round"/><path d="M705.2 453.3 C691.5 453.3 681 463.5 681 476.5 C681 484 683.5 489.5 686.5 496 C689 501.5 691 509 691.6 519.6 L719.6 519.6 C720.2 509 722.2 501.5 724.7 496 C727.7 489.5 730 484 730 476.5 C730 463.5 719 453.3 705.2 453.3 Z" fill="#ff2a0c"/><path d="M693.2 523.9 H717.6" stroke="#ff2a0c" stroke-width="3.6" stroke-linecap="round"/><path d="M694.6 529.6 H716 C715.5 533.6 711 536.4 705.3 536.4 C699.6 536.4 695.1 533.6 694.6 529.6 Z" fill="#ff2a0c"/><g stroke="#ff2a0c" stroke-width="5.6" stroke-linecap="round"><path d="M705.3 434.8 V443.6"/><path d="M677.1 447.9 L681.3 452.6"/><path d="M733.5 447.9 L729.2 452.6"/><path d="M662.7 477.4 H672"/><path d="M738.6 477.4 H747.8"/></g></svg>
</div></div>
</div></div>
</body></html>
